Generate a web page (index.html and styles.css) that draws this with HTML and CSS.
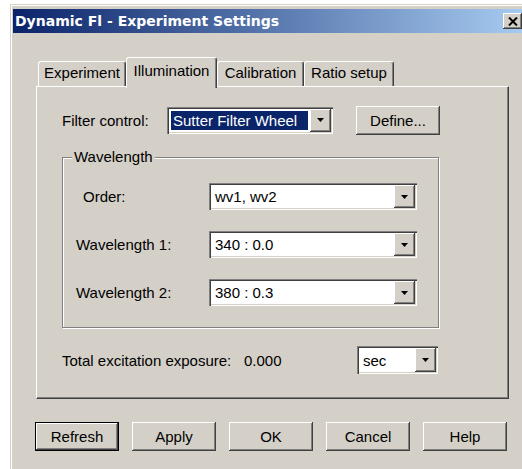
FILE: index.html
```html
<!DOCTYPE html>
<html>
<head>
<meta charset="utf-8">
<title>Dynamic Fl - Experiment Settings</title>
<link rel="stylesheet" href="styles.css">
</head>
<body>
<div class="window">
  <div class="titlebar">
    <span class="title">Dynamic Fl - Experiment Settings</span>
    <span class="close">
      <svg width="10" height="9" viewBox="0 0 10 9"><path d="M1 0.5L9 8.5M9 0.5L1 8.5" stroke="#000" stroke-width="2"/></svg>
    </span>
  </div>
  <div class="body">
    <div class="tabs">
      <div class="tab t-exp">Experiment</div>
      <div class="tab t-ill active">Illumination</div>
      <div class="tab t-cal">Calibration</div>
      <div class="tab t-ratio">Ratio setup</div>
    </div>
    <div class="panel">
      <div class="filter-row">
        <span class="filter-lbl">Filter control:</span>
        <div class="combo combo-filter">
          <span class="val selected">Sutter Filter Wheel</span>
          <span class="drop"><svg width="7" height="4" viewBox="0 0 7 4"><path d="M0 0H7L3.5 4Z"/></svg></span>
        </div>
        <button class="btn define">Define...</button>
      </div>
      <fieldset class="group">
        <legend>Wavelength</legend>
        <div class="wl-grid">
          <span class="order-lbl">Order:</span>
          <div class="combo">
            <span class="val">wv1, wv2</span>
            <span class="drop"><svg width="7" height="4" viewBox="0 0 7 4"><path d="M0 0H7L3.5 4Z"/></svg></span>
          </div>
          <span>Wavelength 1:</span>
          <div class="combo">
            <span class="val">340 : 0.0</span>
            <span class="drop"><svg width="7" height="4" viewBox="0 0 7 4"><path d="M0 0H7L3.5 4Z"/></svg></span>
          </div>
          <span>Wavelength 2:</span>
          <div class="combo">
            <span class="val">380 : 0.3</span>
            <span class="drop"><svg width="7" height="4" viewBox="0 0 7 4"><path d="M0 0H7L3.5 4Z"/></svg></span>
          </div>
        </div>
      </fieldset>
      <div class="total-row">
        <span class="total-lbl">Total excitation exposure:</span>
        <span class="total-val">0.000</span>
        <div class="combo combo-sec">
          <span class="val">sec</span>
          <span class="drop"><svg width="7" height="4" viewBox="0 0 7 4"><path d="M0 0H7L3.5 4Z"/></svg></span>
        </div>
      </div>
    </div>
    <div class="actions">
      <button class="btn default">Refresh</button>
      <button class="btn">Apply</button>
      <button class="btn">OK</button>
      <button class="btn">Cancel</button>
      <button class="btn">Help</button>
    </div>
  </div>
</div>
</body>
</html>
```

FILE: styles.css
```css
html, body {
  margin: 0;
  background: #fff;
  overflow: hidden;
}

body {
  font-family: "Liberation Sans", Arial, sans-serif;
  font-size: 15px;
  color: #000;
}

/* dialog frame */
.window {
  margin: 4px 0 0 10px;
  width: 512px;
  height: 465px;
  box-sizing: border-box;
  background: #d4d0c8;
  border-top: 1px solid #d4d0c8;
  border-left: 1px solid #d4d0c8;
  box-shadow: inset 1px 1px #fff;
  padding: 4px 0 0 2px;
}

.titlebar {
  height: 24px;
  display: flex;
  align-items: center;
  justify-content: space-between;
  padding-left: 2px;
  background: linear-gradient(to right, #0a246a, #a6caf0);
}

.title {
  font-family: "DejaVu Sans", Verdana, sans-serif;
  font-weight: bold;
  font-size: 14px;
  color: #fff;
}

.close {
  width: 19px;
  height: 16px;
  display: flex;
  align-items: center;
  justify-content: center;
  background: #d4d0c8;
  box-shadow: inset -1px -1px #404040, inset 1px 1px #fff, inset -2px -2px #808080;
}

.body {
  padding: 24px 0 0 23px;
}

/* tab strip */
.tabs {
  display: flex;
  align-items: flex-end;
  height: 29px;
  padding-left: 2px;
}

.tab {
  height: 25px;
  box-sizing: border-box;
  padding-top: 2px;
  line-height: 17px;
  text-align: center;
  background: #d4d0c8;
  border-top: 1px solid #fff;
  border-left: 1px solid #fff;
  border-right: 1px solid #404040;
  box-shadow: inset -1px 0 #808080;
  border-radius: 3px 3px 0 0;
}

.tab.active {
  height: 31px;
  padding-top: 4px;
  margin-bottom: -2px;
  position: relative;
  z-index: 1;
}

.t-exp { width: 88px; }
.t-ill { width: 91px; }
.t-cal { width: 87px; }
.t-ratio { width: 90px; }

.panel {
  width: 473px;
  height: 313px;
  box-sizing: border-box;
  border-top: 1px solid #fff;
  border-left: 1px solid #fff;
  border-right: 1px solid #404040;
  border-bottom: 1px solid #404040;
  box-shadow: inset -1px -1px #808080;
  padding: 17px 0 0 25px;
}

/* filter selector */
.filter-row {
  display: flex;
  align-items: center;
  height: 32px;
}

.filter-lbl { width: 105px; }

.combo-filter { width: 166px; }

.define {
  margin-left: 23px;
  height: 32px;
}

/* combo boxes */
.combo {
  height: 27px;
  box-sizing: border-box;
  display: flex;
  padding: 2px;
  background: #fff;
  box-shadow: inset 1px 1px #808080, inset 2px 2px #404040, inset -1px -1px #fff, inset -2px -2px #d4d0c8;
}

.val {
  flex: 1;
  display: flex;
  align-items: center;
  margin: 2px;
  padding-left: 2px;
  white-space: nowrap;
  overflow: hidden;
}

.val.selected {
  background: #0a246a;
  color: #fff;
}

.drop {
  width: 21px;
  display: flex;
  align-items: center;
  justify-content: center;
  background: #d4d0c8;
  box-shadow: inset -1px -1px #404040, inset 1px 1px #fff, inset -2px -2px #808080;
}

/* wavelength group box */
.group {
  margin: 13px 0 0 0;
  padding: 0 0 21px 9px;
  width: 377px;
  box-sizing: border-box;
  min-inline-size: auto;
  border: 1px solid #808080;
  box-shadow: inset 1px 1px #fff, 1px 1px #fff;
}

.group legend {
  padding: 0 2px;
  line-height: 16px;
  background: #d4d0c8;
}

.wl-grid {
  display: grid;
  grid-template-columns: 133px 208px;
  grid-auto-rows: 27px;
  row-gap: 21px;
  align-items: center;
  padding: 18px 0 0 4px;
}

.order-lbl { padding-left: 7px; }

/* exposure row */
.total-row {
  display: flex;
  align-items: center;
  height: 28px;
  margin-top: 18px;
}

.total-lbl { width: 182px; }
.total-val { width: 113px; }

.combo-sec {
  width: 81px;
  height: 28px;
}

/* push buttons */
.btn {
  width: 84px;
  height: 29px;
  padding: 0;
  font: inherit;
  color: #000;
  background: #d4d0c8;
  border: none;
  box-sizing: border-box;
  box-shadow: inset -1px -1px #404040, inset 1px 1px #fff, inset -2px -2px #808080;
}

.btn.default {
  border: 1px solid #000;
}

.actions {
  display: flex;
  gap: 13px;
  margin: 23px 0 0 -1px;
}
```
